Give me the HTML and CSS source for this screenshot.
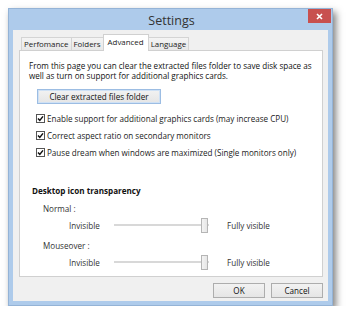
FILE: index.html
```html
<!DOCTYPE html>
<html>
<head>
<meta charset="utf-8">
<link rel="stylesheet" href="styles.css">
</head>
<body>
<div class="window">
  <div class="titlebar">
    <span></span>
    <span class="title">Settings</span>
    <span class="close"><svg width="7" height="7" viewBox="0 0 7 7"><path d="M1 1L6 6M6 1L1 6" stroke="#fff" stroke-width="1.6"/></svg></span>
  </div>
  <div class="client">
    <div class="tabs">
      <div class="tab">Perfomance</div>
      <div class="tab">Folders</div>
      <div class="tab active">Advanced</div>
      <div class="tab">Language</div>
    </div>
    <div class="panel">
      <p class="intro">From this page you can clear the extracted files folder to save disk space as well as turn on support for additional graphics cards.</p>
      <div class="btn clear">Clear extracted files folder</div>
      <div class="checks">
        <div class="check"><span class="box"><svg width="9" height="9" viewBox="0 0 9 9"><rect x="0.5" y="0.5" width="8" height="8" fill="#fff" stroke="#555"/><path d="M2 4.4L3.8 6.4L7 2.4" fill="none" stroke="#111" stroke-width="1.5"/></svg></span>Enable support for additional graphics cards (may increase CPU)</div>
        <div class="check"><span class="box"><svg width="9" height="9" viewBox="0 0 9 9"><rect x="0.5" y="0.5" width="8" height="8" fill="#fff" stroke="#555"/><path d="M2 4.4L3.8 6.4L7 2.4" fill="none" stroke="#111" stroke-width="1.5"/></svg></span>Correct aspect ratio on secondary monitors</div>
        <div class="check"><span class="box"><svg width="9" height="9" viewBox="0 0 9 9"><rect x="0.5" y="0.5" width="8" height="8" fill="#fff" stroke="#555"/><path d="M2 4.4L3.8 6.4L7 2.4" fill="none" stroke="#111" stroke-width="1.5"/></svg></span>Pause dream when windows are maximized (Single monitors only)</div>
      </div>
      <div class="heading">Desktop icon transparency</div>
      <div class="group">
        <div class="label">Normal :</div>
        <div class="slider-row"><span class="lo">Invisible</span><span class="track"><span class="thumb"></span></span><span class="hi">Fully visible</span></div>
      </div>
      <div class="group">
        <div class="label">Mouseover :</div>
        <div class="slider-row"><span class="lo">Invisible</span><span class="track"><span class="thumb"></span></span><span class="hi">Fully visible</span></div>
      </div>
    </div>
    <div class="buttons">
      <div class="btn dlg">OK</div>
      <div class="btn dlg">Cancel</div>
    </div>
  </div>
</div>
</body>
</html>
```
FILE: styles.css
```css
html, body {
  margin: 0;
  padding: 0;
  background: #fff;
}
body {
  font-family: "Open Sans", "Noto Sans", sans-serif;
  font-size: 8.1px;
  color: #1a1a1a;
}
.window {
  margin: 8px 0 0 8px;
  width: 325px;
  height: 298px;
  box-sizing: border-box;
  background: #aecbeb;
  border: 1px solid #94b3d6;
  padding: 0 4px 4px 4px;
  box-shadow: 3px 4px 7px rgba(0,0,0,0.5);
  display: flex;
  flex-direction: column;
}
.titlebar {
  height: 21px;
  display: grid;
  grid-template-columns: 1fr auto 1fr;
  align-items: start;
}
.title {
  font-size: 12.5px;
  color: #333;
  line-height: 12px;
  margin-top: 6px;
  padding-left: 2px;
}
.close {
  justify-self: end;
  width: 23px;
  height: 14px;
  background: #c8504f;
  margin-right: -3px;
  display: flex;
  align-items: center;
  justify-content: center;
}
.close svg { display: block; }
.client {
  flex: 1;
  background: #f0f0f0;
  padding: 5px 5px 0 6px;
  display: flex;
  flex-direction: column;
}
.tabs {
  display: flex;
  align-items: flex-end;
  height: 15px;
  padding-left: 2px;
  position: relative;
  z-index: 1;
}
.tab {
  height: 12px;
  line-height: 12px;
  padding: 0 2px;
  font-size: 7.9px;
  border: 1px solid #d4d4d4;
  border-bottom: none;
  background: linear-gradient(#f4f4f4, #e8e8e8);
  margin-right: -1px;
  color: #222;
}
.tab.active {
  line-height: 14px;
  background: #fff;
  padding: 0 4px;
  margin: 0 -1px -1px 0;
  border-color: #d0d0d0;
  height: 16px;
}
.panel {
  height: 227px;
  box-sizing: border-box;
  background: #fff;
  border: 1px solid #d0d0d0;
  padding: 10px 10px 0 9px;
}
.intro {
  margin: 0;
  line-height: 10px;
  width: 290px;
  color: #111;
}
.btn {
  box-sizing: border-box;
  border: 1px solid #adadad;
  background: linear-gradient(#f2f2f2, #e5e5e5);
  text-align: center;
  color: #111;
}
.clear {
  width: 124px;
  height: 15px;
  line-height: 13px;
  margin: 8px 0 0 8px;
  border-color: #9cbde3;
  box-shadow: inset 0 0 0 1px #cfe1f5;
}
.checks {
  margin: 9px 0 0 7px;
  display: flex;
  flex-direction: column;
  gap: 6px;
}
.check {
  display: flex;
  align-items: center;
  height: 11px;
  line-height: 11px;
}
.box {
  width: 9px;
  height: 9px;
  margin-right: 2px;
}
.box svg { display: block; }
.heading {
  font-weight: bold;
  margin: 27px 0 0 3px;
  line-height: 11px;
  color: #111;
}
.group {
  margin-top: 7px;
}
.label {
  margin-left: 14px;
  line-height: 11px;
  color: #333;
}
.slider-row {
  display: flex;
  align-items: center;
  height: 16px;
  margin: 3px 0 0 40px;
}
.lo {
  width: 45px;
  color: #333;
}
.track {
  width: 95px;
  height: 2px;
  background: #e3e3e3;
  border: 1px solid #d8d8d8;
  box-sizing: border-box;
  display: flex;
  justify-content: flex-end;
  align-items: center;
}
.thumb {
  width: 7px;
  height: 15px;
  box-sizing: border-box;
  border: 1px solid #b5b5b5;
  background: linear-gradient(90deg, #f3f3f3, #e6e6e6);
  flex: none;
}
.hi {
  margin-left: 18px;
  color: #333;
}
.buttons {
  display: flex;
  justify-content: flex-end;
  gap: 6px;
  margin-top: 6px;
}
.dlg {
  width: 52px;
  height: 15px;
  line-height: 13px;
}
```
